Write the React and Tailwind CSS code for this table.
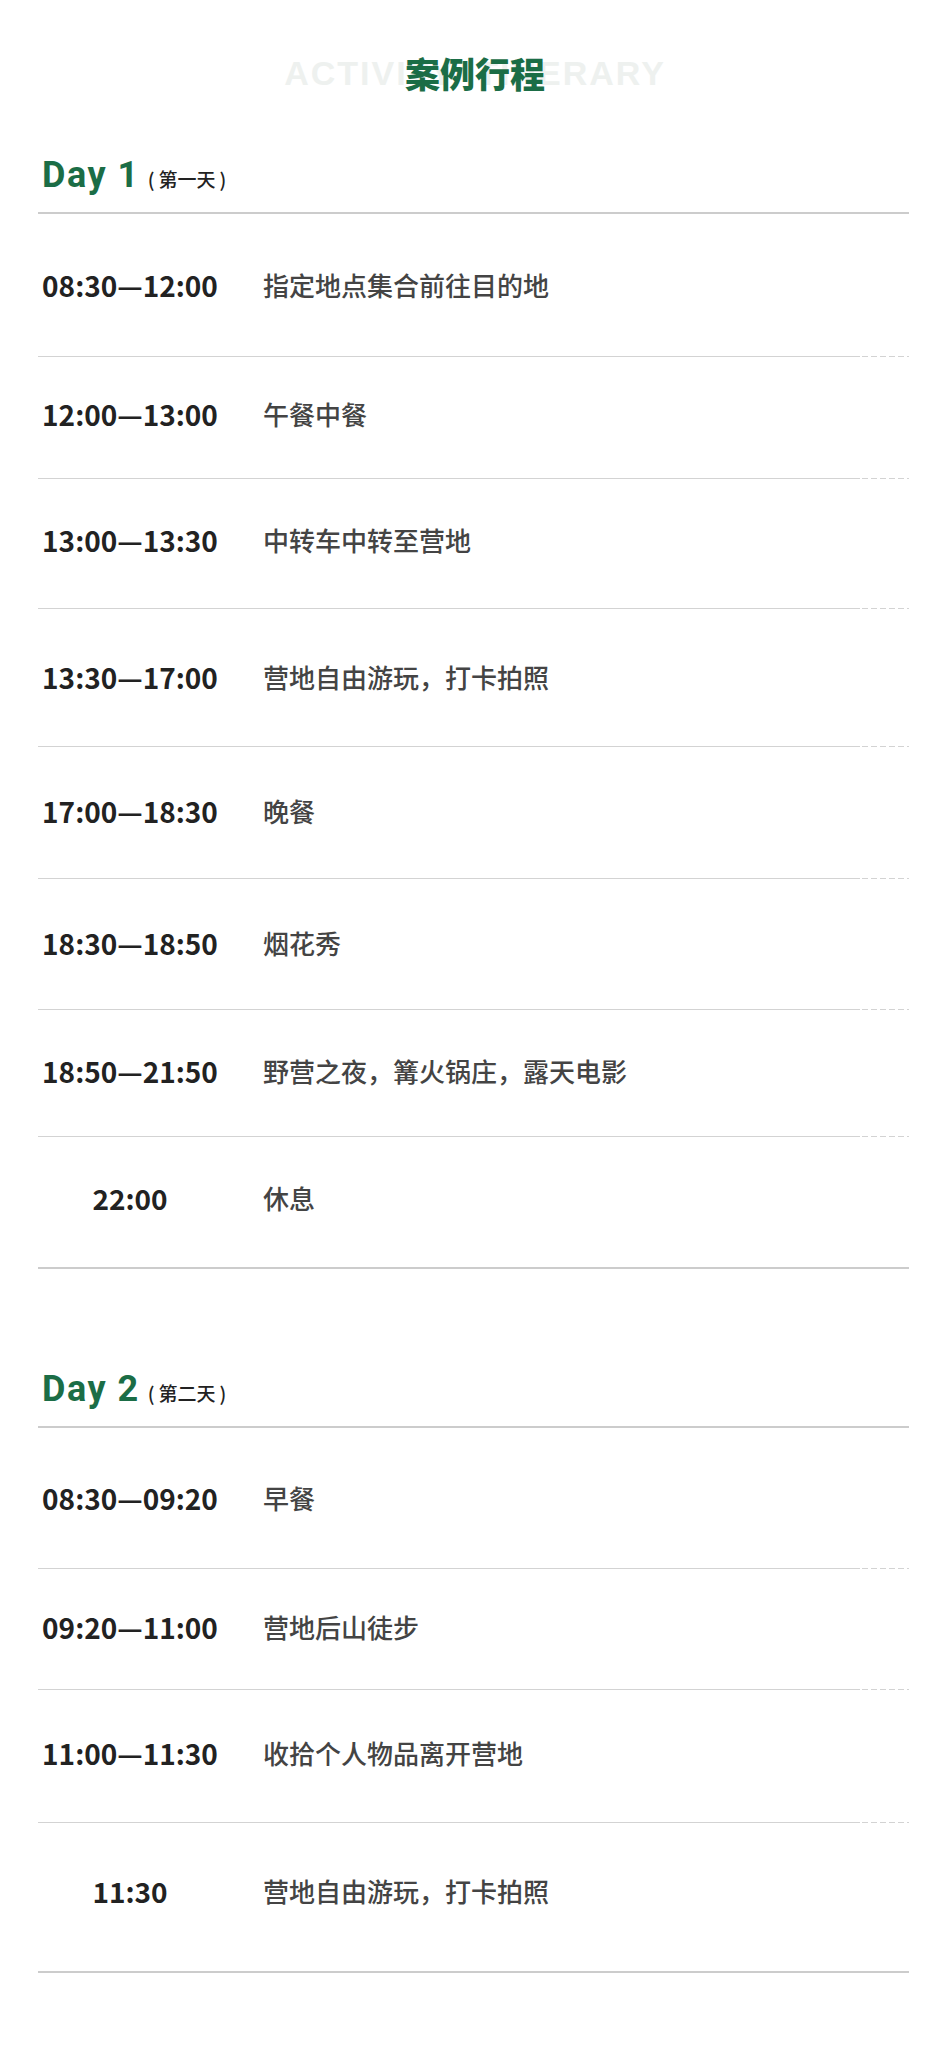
const cjk = { fontFamily: '"Noto Sans CJK SC", "Noto Sans", sans-serif' };

const days = [
  {
    title: "Day 1",
    sub: "第一天",
    gap: "mt-[67px]",
    rows: [
      { h: "h-[142px]", time: "08:30—12:00", text: "指定地点集合前往目的地" },
      { h: "h-[121px] pb-[7px]", time: "12:00—13:00", text: "午餐中餐" },
      { h: "h-[129px] pb-[7px]", time: "13:00—13:30", text: "中转车中转至营地" },
      { h: "h-[137px] pb-[2px]", time: "13:30—17:00", text: "营地自由游玩，打卡拍照" },
      { h: "h-[131px] pb-[4px]", time: "17:00—18:30", text: "晚餐" },
      { h: "h-[130px] pb-[2px]", time: "18:30—18:50", text: "烟花秀" },
      { h: "h-[126px] pb-[4px]", time: "18:50—21:50", text: "野营之夜，篝火锅庄，露天电影" },
      { h: "h-[130px] pb-[9px]", time: "22:00", text: "休息" },
    ],
  },
  {
    title: "Day 2",
    sub: "第二天",
    gap: "mt-[102px]",
    rows: [
      { h: "h-[140px]", time: "08:30—09:20", text: "早餐" },
      { h: "h-[120px] pb-[5px]", time: "09:20—11:00", text: "营地后山徒步" },
      { h: "h-[132px] pb-[6px]", time: "11:00—11:30", text: "收拾个人物品离开营地" },
      { h: "h-[148px] pb-[12px]", time: "11:30", text: "营地自由游玩，打卡拍照" },
    ],
  },
];

// thin separator: solid line that turns into short dashes at the right end
const Sep = () => (
  <div className="flex h-px">
    <div className="flex-1 bg-[#d3d3d3]" />
    <div className="w-[49px] bg-[linear-gradient(to_right,transparent_2px,#d3d3d3_2px,#d3d3d3_8px,transparent_8px)] bg-[length:9px_1px]" />
  </div>
);

function Row({ h, time, text }) {
  return (
    <div className={`flex items-center ${h}`} style={cjk}>
      <div className="w-[184px] text-center text-[28px] font-bold leading-none text-[#222222]">
        {time}
      </div>
      <div className="ml-[41px] text-[26px] font-medium leading-none text-[#444444]">
        {text}
      </div>
    </div>
  );
}

function Day({ day }) {
  return (
    <section className={day.gap}>
      <div className="flex h-[36px] items-baseline leading-none">
        <span
          className="pl-[4px] text-[36px] font-bold tracking-[1.5px] text-[#1b6d46]"
          style={{ fontFamily: "Roboto, sans-serif" }}
        >
          {day.title}
        </span>
        <span
          className="ml-[8px] flex items-baseline gap-[4px] text-[19px] font-medium text-[#222222]"
          style={cjk}
        >
          <span>(</span>
          <span>{day.sub}</span>
          <span>)</span>
        </span>
      </div>
      <div className="mt-[19px] h-[2px] bg-[#cccccc]" />
      {day.rows.map((r, i) => (
        <div key={r.time}>
          <Row {...r} />
          {i < day.rows.length - 1 ? (
            <Sep />
          ) : (
            <div className="h-[2px] bg-[#cccccc]" />
          )}
        </div>
      ))}
    </section>
  );
}

export default function App() {
  return (
    <div className="min-h-[2053px] w-[950px] bg-white pb-[80px]">
      <div className="pt-[55px]">
        <div className="relative flex h-[35px] items-center justify-center">
          <div
            className="absolute inset-0 flex items-center justify-center text-[34px] font-bold leading-none tracking-[2px] text-[#eef1ef]"
            style={{ fontFamily: '"Liberation Sans", Arial, sans-serif' }}
          >
            ACTIVITY ITINERARY
          </div>
          <h1
            className="relative text-[35px] font-black leading-none text-[#1b6d46]"
            style={cjk}
          >
            案例行程
          </h1>
        </div>
      </div>
      <div className="ml-[38px] mr-[41px]">
        {days.map((d) => (
          <Day key={d.title} day={d} />
        ))}
      </div>
    </div>
  );
}
